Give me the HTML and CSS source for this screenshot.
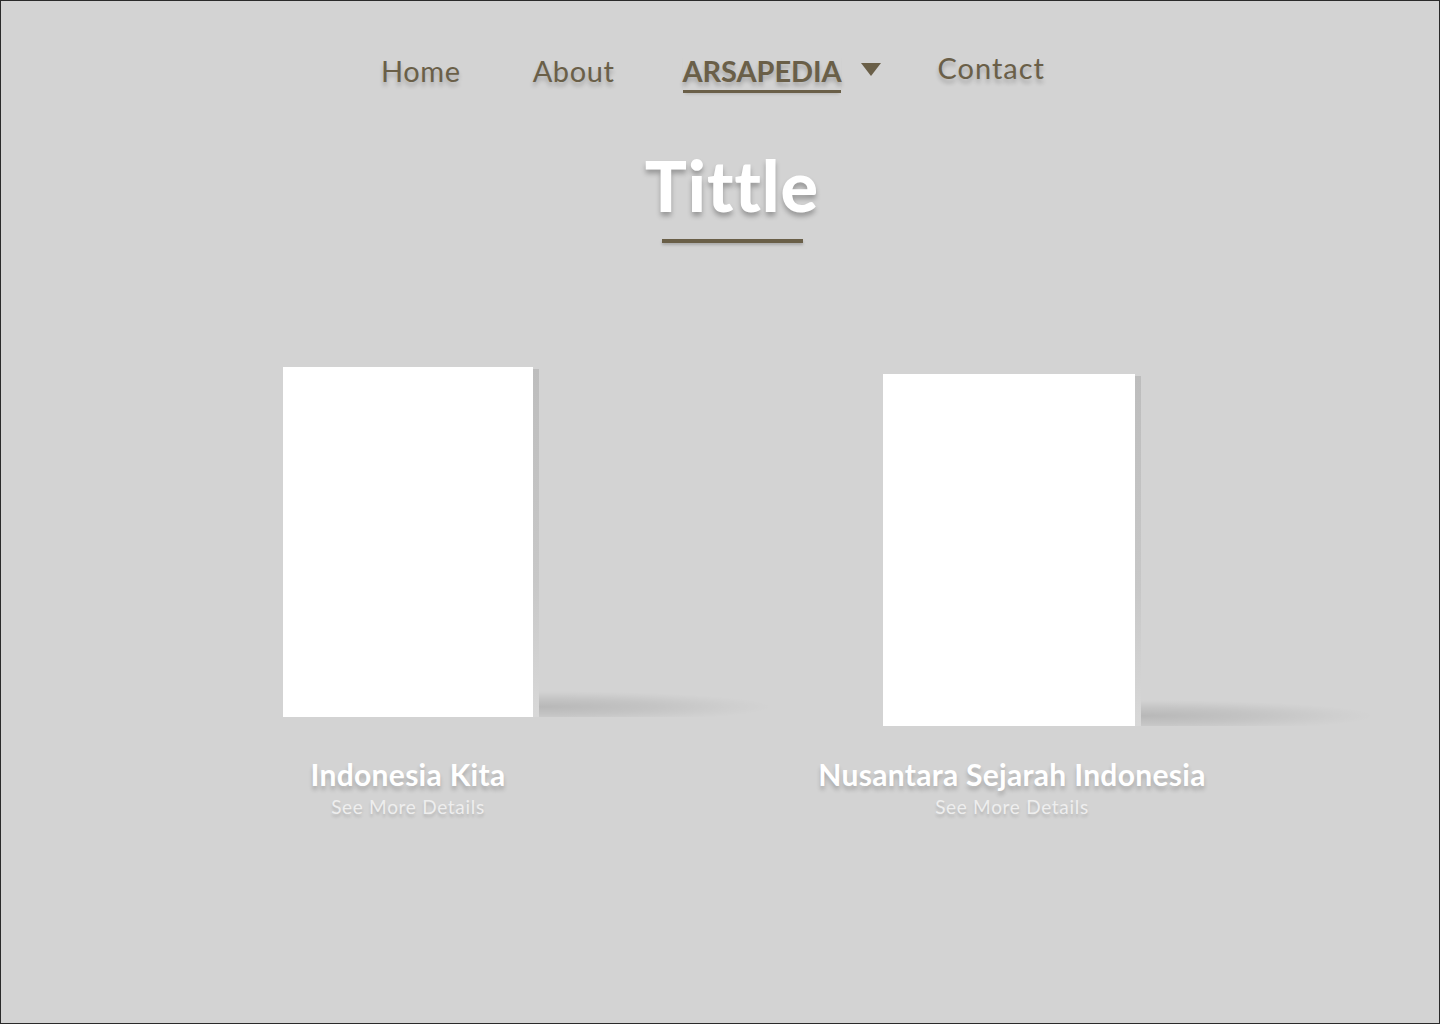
FILE: index.html
```html
<!DOCTYPE html>
<html lang="id">
<head>
<meta charset="utf-8">
<title>Arsapedia</title>
<link rel="stylesheet" href="styles.css">
</head>
<body>
<div class="page">
  <nav class="nav">
    <a class="nav-link" href="#">Home</a>
    <a class="nav-link" href="#">About</a>
    <span class="nav-drop">
      <a class="nav-link active" href="#">ARSAPEDIA</a>
      <svg class="caret" width="20" height="14" viewBox="0 0 20 14"><polygon points="0,0 20,0 10,13" fill="#6a5f48"/></svg>
    </span>
    <a class="nav-link contact" href="#">Contact</a>
  </nav>

  <header class="heading">
    <h1 class="title">Tittle</h1>
    <div class="title-bar"></div>
  </header>

  <section class="books">
    <article class="book">
      <div class="cover-area">
        <div class="cover cover-a"></div>
      </div>
      <h2 class="book-name">Indonesia Kita</h2>
      <a class="book-more" href="#">See More Details</a>
    </article>
    <article class="book">
      <div class="cover-area">
        <div class="cover cover-b"></div>
      </div>
      <h2 class="book-name">Nusantara Sejarah Indonesia</h2>
      <a class="book-more" href="#">See More Details</a>
    </article>
  </section>
</div>
</body>
</html>
```

FILE: styles.css
```css
* { box-sizing: border-box; }
html, body { margin: 0; padding: 0; }
body {
  background: #d3d3d3;
  font-family: "Lato", "Noto Sans", sans-serif;
}
.page {
  width: 1440px;
  height: 1024px;
  border: 1px solid #2a2a2a;
  background: #d3d3d3;
  overflow: hidden;
}
.nav {
  display: flex;
  justify-content: center;
  align-items: flex-start;
  padding-top: 52px;
  padding-right: 14px;
  height: 120px;
}
.nav-link {
  color: #6a5f48;
  text-decoration: none;
  font-size: 29px;
  line-height: 36px;
  letter-spacing: 0.6px;
  text-shadow: 0 4px 4px rgba(0,0,0,0.22);
}
.nav > .nav-link:first-child { margin-right: 72px; }
.nav > .nav-link:nth-child(2) { margin-right: 68px; }
.nav-drop {
  display: flex;
  align-items: flex-start;
  margin-right: 56px;
}
.nav-link.active {
  font-weight: 700;
  letter-spacing: -0.1px;
  padding-bottom: 1px;
  border-bottom: 3px solid #6a5f48;
  box-shadow: 0 3px 3px -2px rgba(0,0,0,0.15);
}
.caret {
  margin-left: 20px;
  margin-top: 10px;
}
.nav-link.contact { margin-top: -3px; letter-spacing: 1px; }

.heading {
  display: flex;
  flex-direction: column;
  align-items: center;
  padding-left: 24px;
}
.title {
  margin: 24px 0 0;
  font-family: "Lato", sans-serif;
  font-weight: 900;
  font-size: 70px;
  line-height: 80px;
  color: #ffffff;
  letter-spacing: 1px;
  text-shadow: 0 4px 5px rgba(0,0,0,0.28);
}
.title-bar {
  width: 141px;
  height: 4px;
  margin-top: 14px;
  background: #6a5f48;
  box-shadow: 0 2px 3px rgba(0,0,0,0.2);
}

.books {
  display: grid;
  grid-template-columns: 604px 604px;
  justify-content: center;
  padding-right: 20px;
  margin-top: 124px;
}
.book {
  display: flex;
  flex-direction: column;
  align-items: center;
}
.cover-area {
  height: 392px;
  width: 100%;
  display: flex;
  justify-content: center;
  align-items: flex-start;
}
.cover {
  position: relative;
  background: #ffffff;
}
.cover-a { width: 250px; height: 350px; margin-top: 0; margin-left: 0; }
.cover-b { width: 252px; height: 352px; margin-top: 7px; margin-left: -6px; }
.cover::before {
  content: "";
  position: absolute;
  top: 2px;
  right: -6px;
  width: 6px;
  bottom: 0;
  background: linear-gradient(to bottom, #bdbdbd, #c7c7c7 60%, #d8d8d8);
}
.cover::after {
  content: "";
  position: absolute;
  left: 100%;
  margin-left: 6px;
  bottom: 0;
  width: 260px;
  height: 32px;
  background: radial-gradient(ellipse 100% 55% at 0% 68%, rgba(0,0,0,0.13), rgba(0,0,0,0.07) 45%, rgba(0,0,0,0.02) 75%, rgba(0,0,0,0) 90%);
}
.book-name {
  margin: 0;
  font-family: "Lato", sans-serif;
  font-weight: 700;
  font-size: 30px;
  line-height: 30px;
  letter-spacing: 0.3px;
  color: #ffffff;
  text-shadow: 0 4px 4px rgba(0,0,0,0.2);
}
.book-more {
  margin-top: 8px;
  font-size: 19px;
  line-height: 19px;
  letter-spacing: 0.7px;
  color: #eeeeee;
  text-decoration: none;
  text-shadow: 0 3px 3px rgba(0,0,0,0.14);
}
```
